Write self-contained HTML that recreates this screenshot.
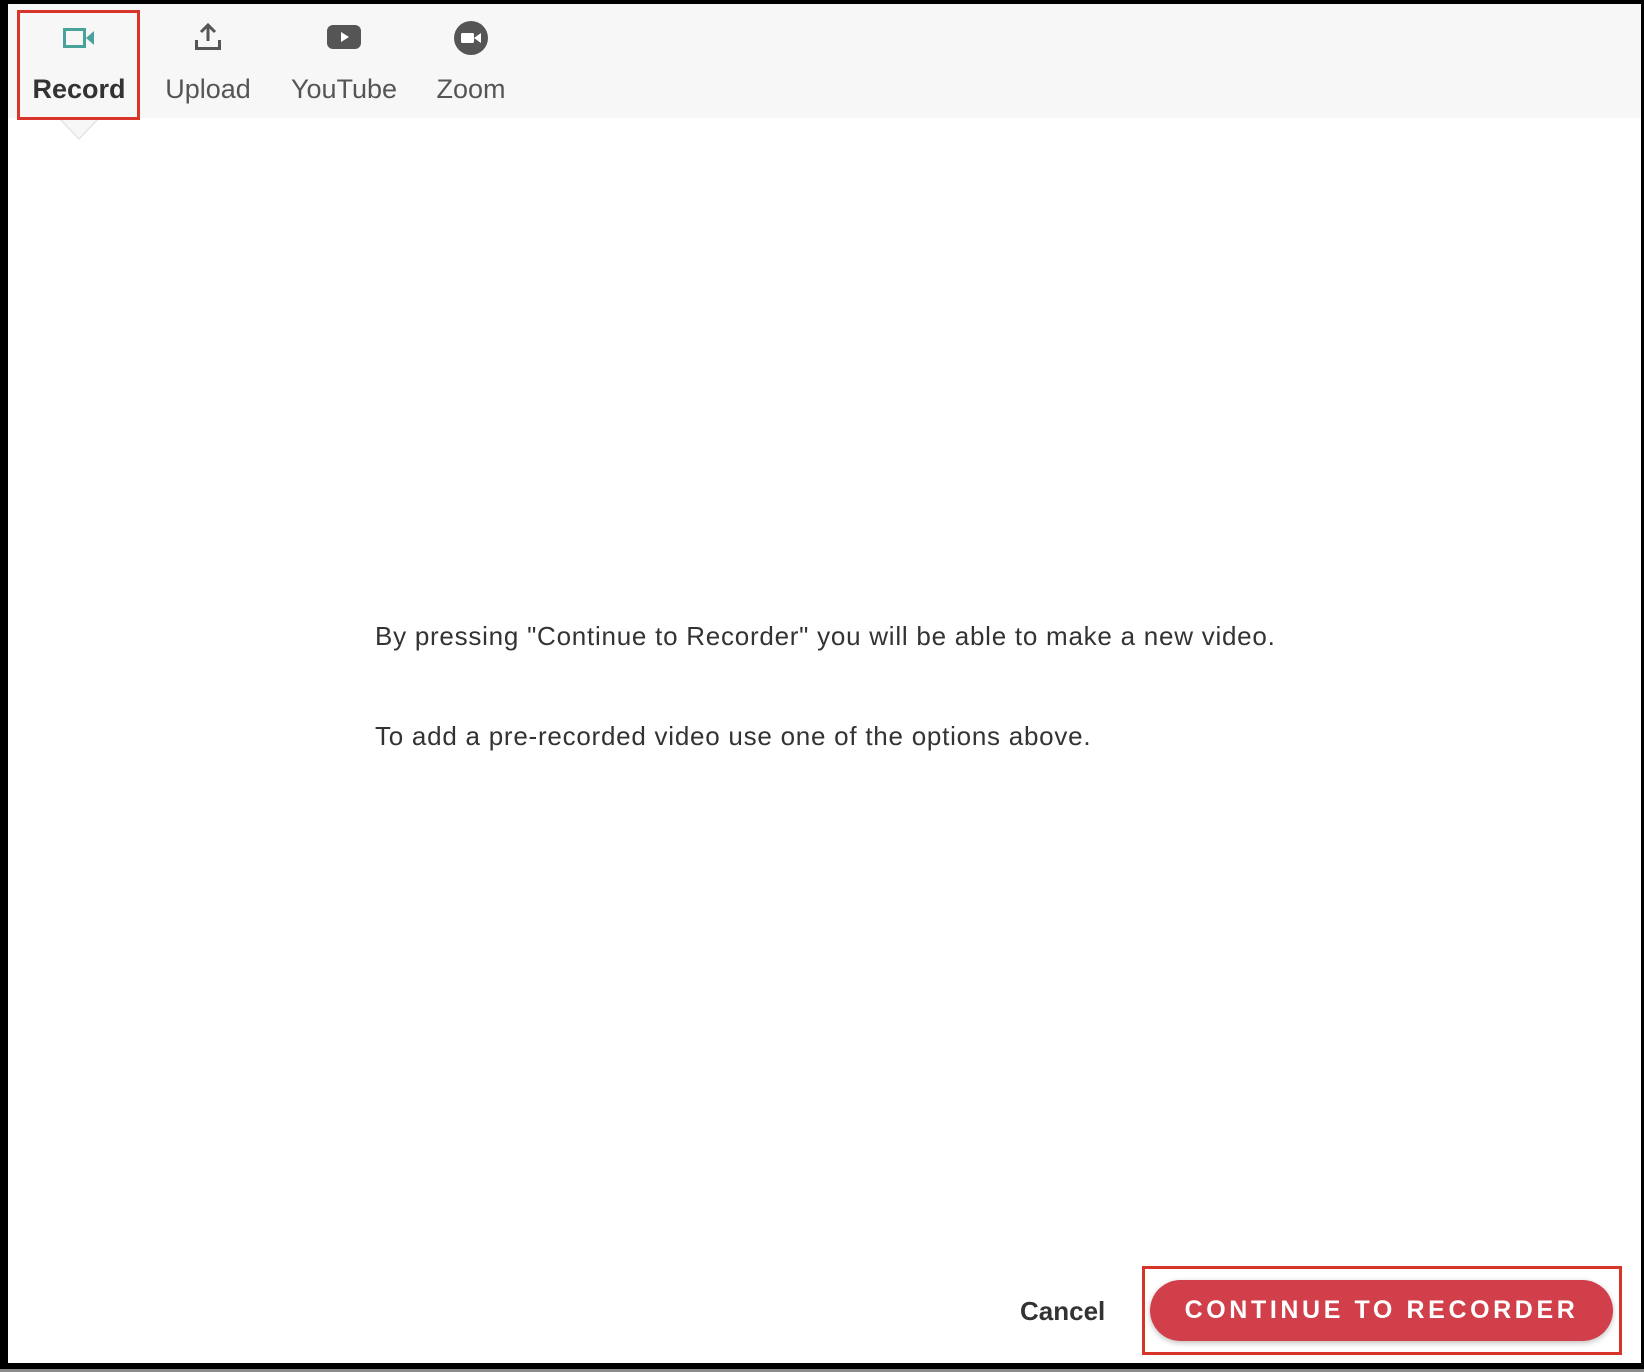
<!DOCTYPE html>
<html><head><style>
*{margin:0;padding:0;box-sizing:border-box}
body{width:1644px;height:1372px;background:#8a8a8a;position:relative;overflow:hidden;font-family:"Liberation Sans",sans-serif;color:#333}
.frame{position:absolute;left:0;top:0;width:1644px;height:1369px;background:#000}
.page{position:absolute;left:8px;top:4px;width:1633px;height:1359px;background:#fff}
.head{position:absolute;left:0;top:0;width:100%;height:114px;background:#f7f7f7}
.tab{position:absolute;top:0;text-align:center;font-size:27px;color:#555}
.tab svg{position:absolute;left:50%;transform:translateX(-50%);top:18px}
.tab span{position:absolute;top:70px;left:50%;transform:translateX(-50%);white-space:nowrap}
.redbox{position:absolute;border:3px solid #d8342a}
.tri{position:absolute;left:50px;top:114px;width:0;height:0;border-left:21px solid transparent;border-right:21px solid transparent;border-top:22px solid #e4e4e4}
.tri2{position:absolute;left:52px;top:114px;width:0;height:0;border-left:19px solid transparent;border-right:19px solid transparent;border-top:20px solid #f7f7f7}
p{position:absolute;left:367px;font-size:26px;letter-spacing:0.75px;color:#333;white-space:nowrap}
.btn{position:absolute;left:1142px;top:1276px;width:463px;height:61px;border-radius:31px;background:#d13f4a;color:#fff;font-weight:bold;font-size:25px;letter-spacing:3.6px;text-align:center;line-height:61px;box-shadow:0 2px 6px rgba(0,0,0,.25)}
.cancel{position:absolute;left:1012px;top:1292px;font-weight:bold;font-size:26px;color:#333}
</style></head><body>
<div class="frame"></div>
<div class="page">
<div class="head"></div>
<div class="tri"></div><div class="tri2"></div>
<div class="tab" style="left:71px"><svg width="32" height="22" viewBox="0 0 32 22" style="top:23px"><rect x="1.5" y="2.5" width="20" height="17" fill="none" stroke="#4aa39b" stroke-width="3"/><path d="M23 11 L31 4 V18 Z" fill="#4aa39b"/></svg><span style="font-weight:bold;color:#333">Record</span></div>
<div class="tab" style="left:200px"><svg width="28" height="30" viewBox="0 0 28 30"><path d="M14 3 V19 M7 10 L14 3 L21 10" fill="none" stroke="#555" stroke-width="3"/><path d="M2.5 18 V26.5 H25.5 V18" fill="none" stroke="#555" stroke-width="3"/></svg><span>Upload</span></div>
<div class="tab" style="left:336px"><svg width="34" height="26" viewBox="0 0 34 26" style="top:20px"><rect x="0" y="1" width="34" height="24" rx="6" fill="#555"/><path d="M14 8 L22 13 L14 18Z" fill="#fff"/></svg><span>YouTube</span></div>
<div class="tab" style="left:463px"><svg width="34" height="34" viewBox="0 0 34 34" style="top:17px"><circle cx="17" cy="17" r="17" fill="#555"/><rect x="7" y="12" width="13" height="10" rx="1.5" fill="#fff"/><path d="M20 17 L27 12 V22Z" fill="#fff"/></svg><span>Zoom</span></div>
<div class="redbox" style="left:9px;top:6px;width:123px;height:110px"></div>
<p style="top:617px">By pressing "Continue to Recorder" you will be able to make a new video.</p>
<p style="top:717px">To add a pre-recorded video use one of the options above.</p>
<div class="cancel">Cancel</div>
<div class="btn">CONTINUE TO RECORDER</div>
<div class="redbox" style="left:1134px;top:1262px;width:480px;height:89px"></div>
</div>
</body></html>
